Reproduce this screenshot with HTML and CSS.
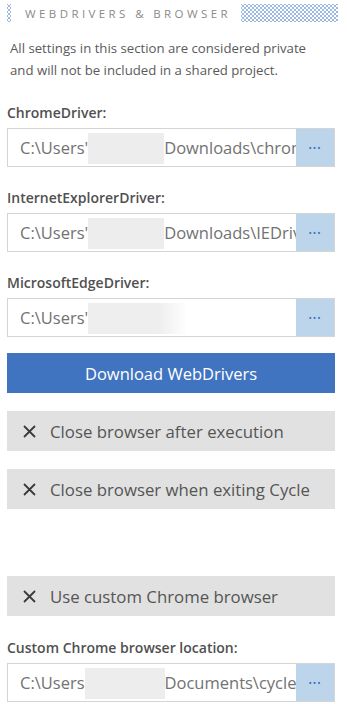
FILE: index.html
```html
<!DOCTYPE html>
<html>
<head>
    <title>WebDrivers &amp; Browser</title>
    <link rel="stylesheet" href="styles.css">
</head>
<body>
    <div class="panel">
        <div class="section-header">
            <span class="dots dots-left"></span>
            <span class="section-title">WEBDRIVERS &amp; BROWSER</span>
            <span class="dots dots-right"></span>
        </div>

        <p class="note">All settings in this section are considered private and will not be included in a shared project.</p>

        <div class="field">
            <div class="field-label">ChromeDriver:</div>
            <div class="path-box">
                <div class="path-text">C:\Users'<span class="redact"></span>Downloads\chromedriver.exe</div>
                <div class="browse-btn">&bull;&bull;&bull;</div>
            </div>
        </div>

        <div class="field">
            <div class="field-label">InternetExplorerDriver:</div>
            <div class="path-box">
                <div class="path-text">C:\Users'<span class="redact"></span>Downloads\IEDriverServer.exe</div>
                <div class="browse-btn">&bull;&bull;&bull;</div>
            </div>
        </div>

        <div class="field">
            <div class="field-label">MicrosoftEdgeDriver:</div>
            <div class="path-box">
                <div class="path-text">C:\Users'<span class="redact redact-wide"></span></div>
                <div class="browse-btn">&bull;&bull;&bull;</div>
            </div>
        </div>

        <button class="download-btn">Download WebDrivers</button>

        <div class="toggle">
            <svg class="x-icon" width="13" height="13" viewBox="0 0 13 13"><path d="M1 1 L12 12 M12 1 L1 12" stroke="#3a3a3a" stroke-width="1.8" fill="none"/></svg>
            <span>Close browser after execution</span>
        </div>
        <div class="toggle">
            <svg class="x-icon" width="13" height="13" viewBox="0 0 13 13"><path d="M1 1 L12 12 M12 1 L1 12" stroke="#3a3a3a" stroke-width="1.8" fill="none"/></svg>
            <span>Close browser when exiting Cycle</span>
        </div>

        <div class="spacer"></div>

        <div class="toggle">
            <svg class="x-icon" width="13" height="13" viewBox="0 0 13 13"><path d="M1 1 L12 12 M12 1 L1 12" stroke="#3a3a3a" stroke-width="1.8" fill="none"/></svg>
            <span>Use custom Chrome browser</span>
        </div>

        <div class="field">
            <div class="field-label">Custom Chrome browser location:</div>
            <div class="path-box">
                <div class="path-text">C:\Users<span class="redact redact-custom"></span>Documents\cycle\chrome.exe</div>
                <div class="browse-btn">&bull;&bull;&bull;</div>
            </div>
        </div>
    </div>
</body>
</html>
```

FILE: styles.css
```css
body {
    margin: 0;
    background: #ffffff;
    font-family: 'Open Sans', 'Noto Sans', sans-serif;
    color: #555;
}

.panel {
    width: 328px;
    padding: 4px 0 0 7px;
}

/* Section header with dotted fillers */
.section-header {
    display: flex;
    align-items: center;
    height: 18px;
}

.dots {
    display: block;
    height: 18px;
    background-image:
        radial-gradient(circle, #9bb8e4 0.9px, transparent 1.1px),
        radial-gradient(circle, #9bb8e4 0.9px, transparent 1.1px);
    background-size: 4px 4px;
    background-position: 0 0, 2px 2px;
}

.dots-left {
    width: 4px;
}

.dots-right {
    flex: 1;
    margin-left: 10px;
    margin-right: -3px;
}

.section-title {
    margin-left: 14px;
    font-size: 11.5px;
    letter-spacing: 3.4px;
    color: #8a8a8a;
    white-space: nowrap;
}

.note {
    width: 312px;
    margin: 15px 0 0 3px;
    font-size: 13.2px;
    line-height: 22px;
    color: #5a5a5a;
}

/* Path fields */
.field {
    margin-top: 22px;
}

.field + .field {
    margin-top: 21px;
}

.field-label {
    font-size: 14px;
    font-weight: 600;
    line-height: 20px;
    color: #505050;
    margin-bottom: 5px;
}

.path-box {
    display: flex;
    height: 39px;
    border: 1px solid #d4d4d4;
    box-sizing: border-box;
}

.path-text {
    flex: 1;
    min-width: 0;
    overflow: hidden;
    white-space: nowrap;
    font-size: 16.5px;
    line-height: 37px;
    padding-left: 12px;
    color: #727272;
}

.redact {
    display: inline-block;
    width: 76px;
    height: 31px;
    vertical-align: middle;
    background: #ededed;
    margin-top: -3px;
}

.redact-wide {
    width: 100px;
    background: linear-gradient(90deg, #eeeeee 70%, #ffffff);
}

.redact-custom {
    width: 80px;
}

.browse-btn {
    flex: none;
    width: 38px;
    background: #bdd5eb;
    color: #3c6fc2;
    font-size: 9px;
    letter-spacing: 1px;
    text-align: center;
    line-height: 37px;
}

/* Buttons and toggles */
.download-btn {
    display: block;
    width: 328px;
    height: 40px;
    margin-top: 16px;
    border: none;
    background: #4174c0;
    color: #fff;
    font-family: 'Open Sans', 'Noto Sans', sans-serif;
    font-size: 16.5px;
}

.toggle {
    display: flex;
    align-items: center;
    height: 40px;
    margin-top: 18px;
    background: #e1e1e1;
    padding-left: 16px;
    font-size: 16.8px;
    color: #555;
}

.x-icon {
    margin-right: 14px;
}

.spacer {
    height: 49px;
}
```
